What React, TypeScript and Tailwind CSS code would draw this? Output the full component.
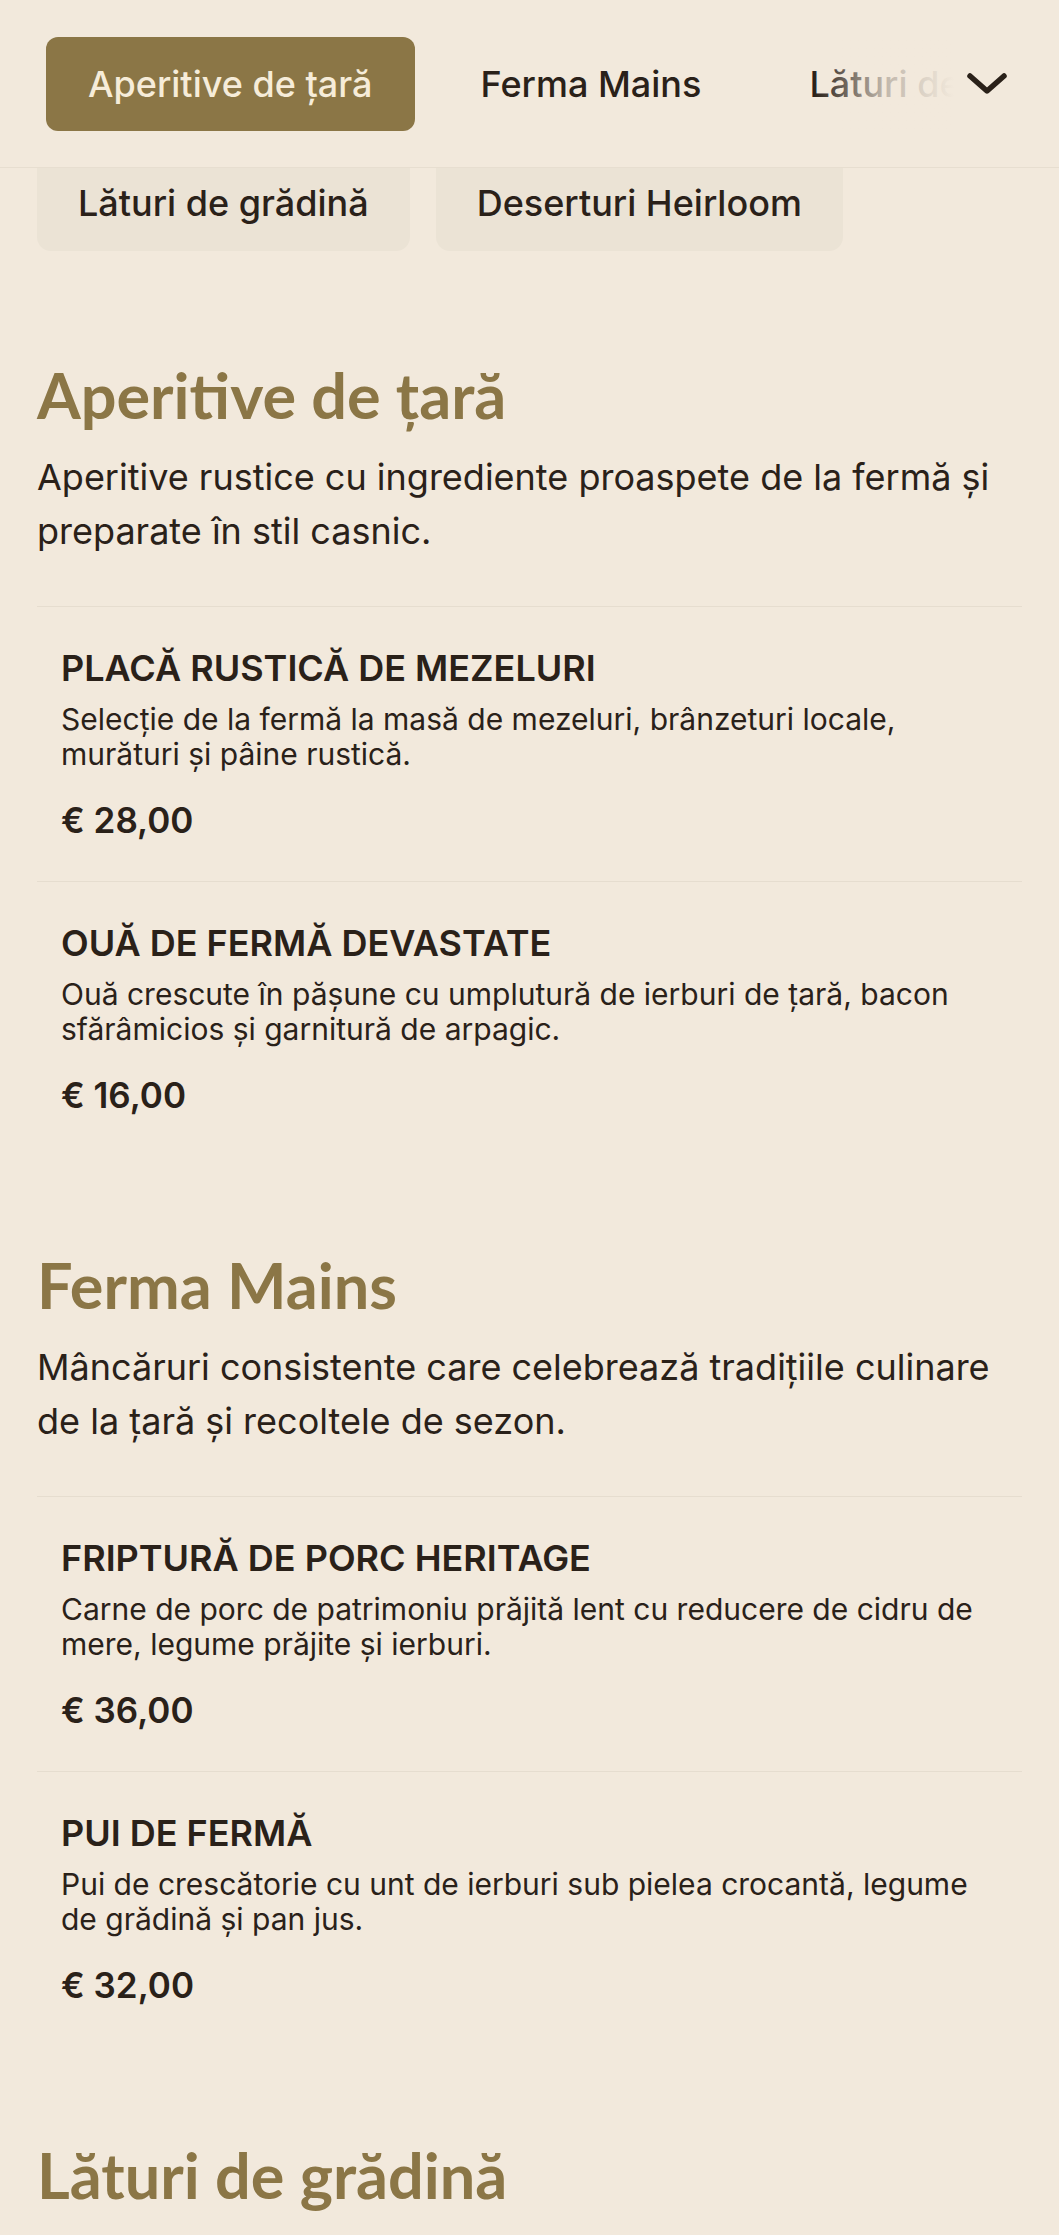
import React from 'react'

type Item = { name: string; desc: string; price: string }
type Section = { title: string; intro: string; items: Item[] }

const sections: Section[] = [
  {
    title: 'Aperitive de țară',
    intro: 'Aperitive rustice cu ingrediente proaspete de la fermă și preparate în stil casnic.',
    items: [
      {
        name: 'PLACĂ RUSTICĂ DE MEZELURI',
        desc: 'Selecție de la fermă la masă de mezeluri, brânzeturi locale, murături și pâine rustică.',
        price: '€ 28,00',
      },
      {
        name: 'OUĂ DE FERMĂ DEVASTATE',
        desc: 'Ouă crescute în pășune cu umplutură de ierburi de țară, bacon sfărâmicios și garnitură de arpagic.',
        price: '€ 16,00',
      },
    ],
  },
  {
    title: 'Ferma Mains',
    intro: 'Mâncăruri consistente care celebrează tradițiile culinare de la țară și recoltele de sezon.',
    items: [
      {
        name: 'FRIPTURĂ DE PORC HERITAGE',
        desc: 'Carne de porc de patrimoniu prăjită lent cu reducere de cidru de mere, legume prăjite și ierburi.',
        price: '€ 36,00',
      },
      {
        name: 'PUI DE FERMĂ',
        desc: 'Pui de crescătorie cu unt de ierburi sub pielea crocantă, legume de grădină și pan jus.',
        price: '€ 32,00',
      },
    ],
  },
  {
    title: 'Lături de grădină',
    intro: 'Garnituri de sezon culese din grădină și gătite simplu.',
    items: [
      {
        name: 'LEGUME RĂDĂCINOASE PRĂJITE',
        desc: 'Morcovi, păstârnac și sfeclă prăjite cu miere și cimbru.',
        price: '€ 12,00',
      },
    ],
  },
]

const tabs = ['Aperitive de țară', 'Ferma Mains', 'Lături de grădină', 'Deserturi Heirloom']

function Chevron() {
  return (
    <svg width="42" height="24" viewBox="0 0 42 24" fill="none">
      <polyline
        points="4,4 21,19 38,4"
        stroke="#2a2119"
        strokeWidth="5.5"
        strokeLinecap="round"
        strokeLinejoin="round"
      />
    </svg>
  )
}

export default function App() {
  return (
    <div className="min-h-screen bg-[#f2e9dc] text-[#2a2119] font-['Inter','Noto_Sans',sans-serif]">
      {/* sticky category bar */}
      <header className="flex h-[168px] items-center border-b border-[#e7ded0] bg-[#f2e9dc] pl-[46px] pr-[51px]">
        <div className="relative min-w-0 flex-1 overflow-hidden">
          <div className="flex gap-6 whitespace-nowrap">
            {tabs.map((t, i) => (
              <button
                key={t}
                className={
                  i === 0
                    ? 'flex h-[94px] shrink-0 items-center rounded-[12px] bg-[#8b7646] px-[42px] text-[36px] font-medium text-[#f6ecd9]'
                    : 'flex h-[94px] shrink-0 items-center rounded-[12px] px-[42px] text-[36px] font-medium text-[#2a2119]'
                }
              >
                {t}
              </button>
            ))}
          </div>
          <div className="pointer-events-none absolute inset-y-0 right-0 w-[140px] bg-gradient-to-r from-[#f2e9dc]/0 via-[#f2e9dc]/75 to-[#f2e9dc]" />
        </div>
        <button className="ml-[12px] flex shrink-0 items-center">
          <Chevron />
        </button>
      </header>

      {/* overflow row of categories */}
      <div className="flex gap-[26px] px-[37px]">
        <div className="flex h-[83px] items-center rounded-b-[14px] bg-[#ebe3d5] px-[41px] pb-[14px] text-[36px] font-medium">
          Lături de grădină
        </div>
        <div className="flex h-[83px] items-center rounded-b-[14px] bg-[#ebe3d5] px-[41px] pb-[14px] text-[36px] font-medium">
          Deserturi Heirloom
        </div>
      </div>

      <main className="px-[37px] pt-[15px]">
        {sections.map((s) => (
          <section key={s.title} className="pt-[93px]">
            <h2 className="font-['Lato',sans-serif] text-[63px] font-bold leading-[72px] text-[#8b7646]">
              {s.title}
            </h2>
            <p className="mt-[19px] pr-[10px] text-[36px] leading-[54px]">{s.intro}</p>
            <div className="mt-[48px]">
              {s.items.map((it) => (
                <div key={it.name} className="border-t border-[#e6ddcf] px-6 pb-[39px] pt-[41px]">
                  <h3 className="text-[36px] font-semibold leading-[40px]">{it.name}</h3>
                  <p className="mt-[14px] pr-[20px] text-[30px] leading-[35px]">{it.desc}</p>
                  <div className="mt-[27px] text-[35px] font-semibold leading-[43px]">{it.price}</div>
                </div>
              ))}
            </div>
          </section>
        ))}
      </main>
    </div>
  )
}
